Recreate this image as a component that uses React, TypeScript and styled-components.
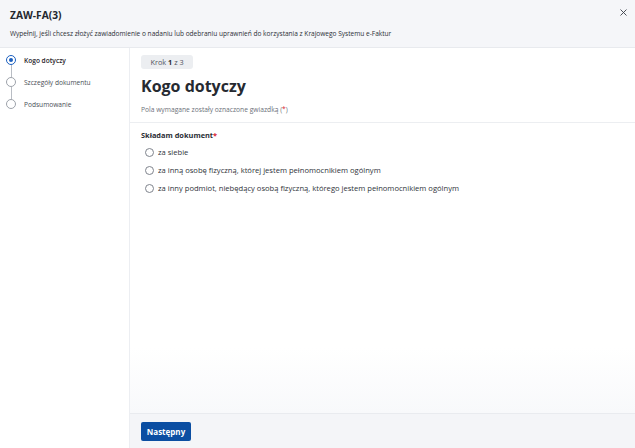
import React from "react";
import styled, { createGlobalStyle } from "styled-components";

const Global = createGlobalStyle`
  html, body { margin: 0; padding: 0; }
  body { font-family: "Open Sans", "Noto Sans", sans-serif; color: #1b1f24; background: #ffffff; }
  #root { height: 448px; }
`;

const Page = styled.div`
  width: 635px;
  height: 448px;
  display: flex;
  flex-direction: column;
  overflow: hidden;
`;

const Header = styled.header`
  position: relative;
  height: 48px;
  box-sizing: border-box;
  background: #f5f6f9;
  border-bottom: 1px solid #e8eaee;
  padding: 8px 10px 0 10px;
`;

const Title = styled.h1`
  margin: 0;
  font-family: "Open Sans", sans-serif;
  font-size: 10.2px;
  font-weight: 700;
  color: #23272e;
  line-height: 14px;
`;

const Subtitle = styled.p`
  margin: 6.5px 0 0 0;
  font-size: 6.55px;
  line-height: 10px;
  color: #2b2f36;
`;

const Close = styled.button`
  position: absolute;
  right: 8px;
  top: 8px;
  width: 8px;
  height: 8px;
  padding: 0;
  border: 0;
  background: transparent;
  display: flex;
  align-items: center;
  justify-content: center;
`;

const Body = styled.div`
  flex: 1;
  display: flex;
  min-height: 0;
`;

const Sidebar = styled.nav`
  width: 130px;
  flex-shrink: 0;
  border-right: 1px solid #eceef2;
  padding: 1px 0 0 6px;
  box-sizing: border-box;
`;

const Step = styled.div`
  position: relative;
  display: flex;
  align-items: center;
  gap: 8px;
  height: 22px;
  &:not(:last-child)::after {
    content: "";
    position: absolute;
    left: 4.5px;
    top: 16px;
    width: 1px;
    height: 12px;
    background: #b9bdc4;
  }
`;

const StepDot = styled.span<{ $active?: boolean }>`
  width: 10px;
  height: 10px;
  box-sizing: border-box;
  border-radius: 50%;
  border: 1px solid ${(p) => (p.$active ? "#1b5fbf" : "#9da2aa")};
  background: #fff;
  display: flex;
  align-items: center;
  justify-content: center;
  &::before {
    content: "";
    width: 4px;
    height: 4px;
    border-radius: 50%;
    background: ${(p) => (p.$active ? "#1b5fbf" : "transparent")};
  }
`;

const StepLabel = styled.span<{ $active?: boolean }>`
  font-size: 6.6px;
  font-weight: ${(p) => (p.$active ? 600 : 400)};
  color: ${(p) => (p.$active ? "#1f232a" : "#4a4f57")};
`;

const Main = styled.main`
  flex: 1;
  display: flex;
  flex-direction: column;
  min-width: 0;
`;

const Content = styled.div`
  flex: 1;
  background: linear-gradient(to bottom, #ffffff 0%, #ffffff 82%, #f8f9fb 100%);
`;

const Intro = styled.div`
  display: flex;
  flex-direction: column;
  align-items: flex-start;
  padding: 7px 11px 0 11px;
  height: 75px;
  box-sizing: border-box;
  border-bottom: 1px solid #eceef1;
`;

const Badge = styled.span`
  display: block;
  background: #eceef1;
  border-radius: 3px;
  padding: 0 9.5px;
  height: 14px;
  line-height: 14px;
  font-size: 7.3px;
  color: #4f545c;
  b { font-weight: 700; color: #2a2e35; }
`;

const Heading = styled.h2`
  margin: 6.5px 0 0 0;
  font-family: "Open Sans", sans-serif;
  font-size: 16px;
  font-weight: 700;
  line-height: 20px;
  color: #262a31;
`;

const Note = styled.p`
  margin: 9.5px 0 0 0;
  font-size: 6.7px;
  line-height: 10px;
  color: #6c717a;
  span { color: #d7202f; }
`;

const Form = styled.div`
  padding: 6px 11px 0 11px;
`;

const Legend = styled.div`
  font-size: 7.4px;
  font-weight: 700;
  color: #2a2e35;
  line-height: 12px;
  span { color: #d7202f; }
`;

const Options = styled.div`
  display: flex;
  flex-direction: column;
  gap: 8px;
  margin-top: 6px;
  padding-left: 4px;
`;

const Option = styled.label`
  display: flex;
  align-items: center;
  gap: 4px;
  font-size: 7.6px;
  line-height: 10px;
  color: #2f333a;
`;

const Radio = styled.span`
  width: 9px;
  height: 9px;
  box-sizing: border-box;
  border-radius: 50%;
  border: 1px solid #7f848d;
  background: #fff;
  flex-shrink: 0;
`;

const Footer = styled.footer`
  height: 35px;
  box-sizing: border-box;
  background: #f4f5f8;
  border-top: 1px solid #e9ebef;
  display: flex;
  align-items: center;
  padding: 0 11px;
`;

const PrimaryButton = styled.button`
  height: 19px;
  width: 50px;
  padding: 0;
  border: 0;
  border-radius: 2px;
  background: #0b4ea2;
  color: #fff;
  font-family: "Open Sans", sans-serif;
  font-size: 8px;
  font-weight: 700;
`;

const steps = ["Kogo dotyczy", "Szczegóły dokumentu", "Podsumowanie"];
const options = [
  "za siebie",
  "za inną osobę fizyczną, której jestem pełnomocnikiem ogólnym",
  "za inny podmiot, niebędący osobą fizyczną, którego jestem pełnomocnikiem ogólnym",
];

export default function App() {
  return (
    <>
      <Global />
      <Page>
        <Header>
          <Title>ZAW-FA(3)</Title>
          <Subtitle>
            Wypełnij, jeśli chcesz złożyć zawiadomienie o nadaniu lub odebraniu uprawnień do korzystania z Krajowego Systemu e-Faktur
          </Subtitle>
          <Close aria-label="Zamknij">
            <svg width="7" height="7" viewBox="0 0 7 7">
              <path d="M0.5 0.5L6.5 6.5M6.5 0.5L0.5 6.5" stroke="#3a3f47" strokeWidth="0.9" />
            </svg>
          </Close>
        </Header>
        <Body>
          <Sidebar>
            {steps.map((s, i) => (
              <Step key={s}>
                <StepDot $active={i === 0} />
                <StepLabel $active={i === 0}>{s}</StepLabel>
              </Step>
            ))}
          </Sidebar>
          <Main>
            <Content>
              <Intro>
                <Badge>
                  Krok <b>1</b> z 3
                </Badge>
                <Heading>Kogo dotyczy</Heading>
                <Note>
                  Pola wymagane zostały oznaczone gwiazdką (<span>*</span>)
                </Note>
              </Intro>
              <Form>
                <Legend>
                  Składam dokument<span>*</span>
                </Legend>
                <Options>
                  {options.map((o) => (
                    <Option key={o}>
                      <Radio />
                      {o}
                    </Option>
                  ))}
                </Options>
              </Form>
            </Content>
            <Footer>
              <PrimaryButton>Następny</PrimaryButton>
            </Footer>
          </Main>
        </Body>
      </Page>
    </>
  );
}
